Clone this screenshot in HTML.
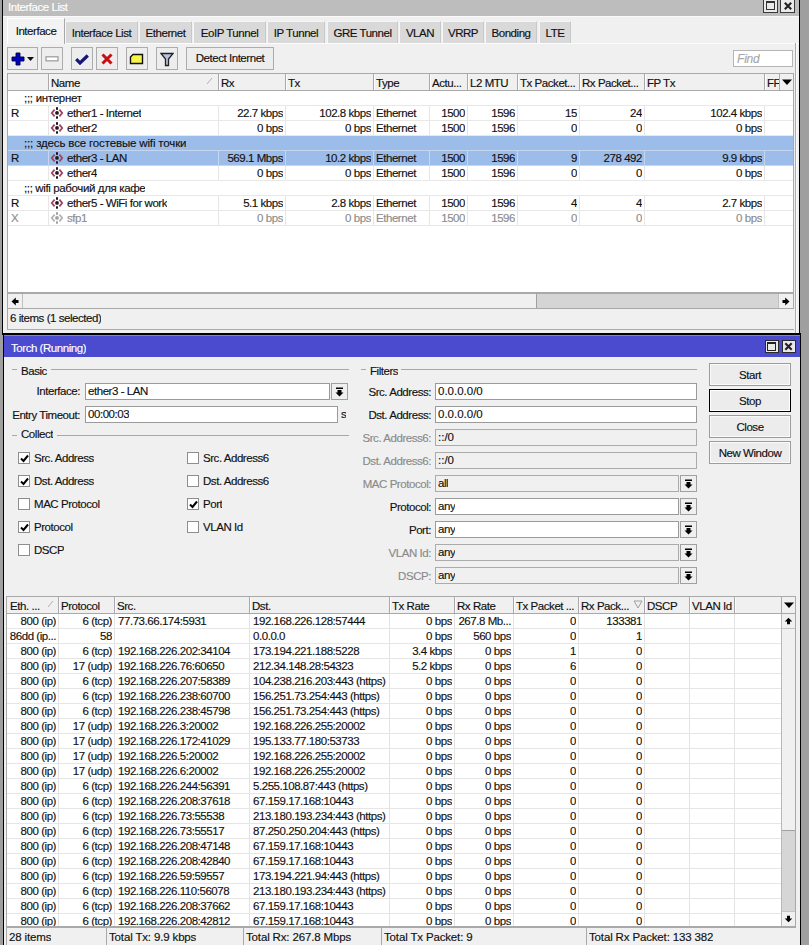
<!DOCTYPE html><html><head><meta charset="utf-8"><style>
*{margin:0;padding:0;box-sizing:border-box}
html,body{width:809px;height:945px;overflow:hidden;background:#9f9f9f}
body{position:relative;font-family:"Liberation Sans",sans-serif;font-size:11.5px;letter-spacing:-0.45px;color:#111}
div{position:absolute}
.t{white-space:nowrap;overflow:hidden;-webkit-text-stroke:0.15px currentColor}
</style></head><body><div style="left:2px;top:0px;width:798px;height:335px;background:#000"></div>
<div style="left:3px;top:0px;width:796px;height:333px;background:#f0f0f0"></div>
<div style="left:3px;top:0px;width:796px;height:16px;background:#bdbdbd"></div>
<div class="t" style="left:8px;top:0px;height:15px;line-height:15px;text-align:left;color:#fff;">Interface List</div>
<div style="left:3px;top:16px;width:796px;height:1px;background:#fafafa"></div>
<div style="left:763px;top:0px;width:15px;height:13px;background:#eaeaea;border:1px solid #3a3a3a;border-top:none"></div>
<div style="left:780px;top:0px;width:15px;height:13px;background:#eaeaea;border:1px solid #3a3a3a;border-top:none"></div>
<div style="left:766px;top:1px;width:9px;height:9px;border:1.5px solid #333;border-top-width:2px"></div>
<svg style="position:absolute;left:784px;top:2px" width="8" height="8"><path d="M0.8 0.8L7.2 7.2M7.2 0.8L0.8 7.2" stroke="#222" stroke-width="2.1"/></svg>
<div style="left:7px;top:18px;width:58px;height:26px;background:#f3f3f3;border:1px solid #fff;border-right:1px solid #a8a8a8;border-bottom:none"></div>
<div class="t" style="left:7px;top:24px;width:58px;height:15px;line-height:15px;text-align:center;">Interface</div>
<div style="left:65px;top:21px;width:73px;height:22px;background:#d9d9d9;border-left:1px solid #f6f6f6;border-top:1px solid #f6f6f6;border-right:1px solid #c8c8c8"></div>
<div class="t" style="left:65px;top:26px;width:73px;height:15px;line-height:15px;text-align:center;">Interface List</div>
<div style="left:139px;top:21px;width:53px;height:22px;background:#d9d9d9;border-left:1px solid #f6f6f6;border-top:1px solid #f6f6f6;border-right:1px solid #c8c8c8"></div>
<div class="t" style="left:139px;top:26px;width:53px;height:15px;line-height:15px;text-align:center;">Ethernet</div>
<div style="left:193px;top:21px;width:73px;height:22px;background:#d9d9d9;border-left:1px solid #f6f6f6;border-top:1px solid #f6f6f6;border-right:1px solid #c8c8c8"></div>
<div class="t" style="left:193px;top:26px;width:73px;height:15px;line-height:15px;text-align:center;">EoIP Tunnel</div>
<div style="left:267px;top:21px;width:58px;height:22px;background:#d9d9d9;border-left:1px solid #f6f6f6;border-top:1px solid #f6f6f6;border-right:1px solid #c8c8c8"></div>
<div class="t" style="left:267px;top:26px;width:58px;height:15px;line-height:15px;text-align:center;">IP Tunnel</div>
<div style="left:327px;top:21px;width:71px;height:22px;background:#d9d9d9;border-left:1px solid #f6f6f6;border-top:1px solid #f6f6f6;border-right:1px solid #c8c8c8"></div>
<div class="t" style="left:327px;top:26px;width:71px;height:15px;line-height:15px;text-align:center;">GRE Tunnel</div>
<div style="left:399px;top:21px;width:42px;height:22px;background:#d9d9d9;border-left:1px solid #f6f6f6;border-top:1px solid #f6f6f6;border-right:1px solid #c8c8c8"></div>
<div class="t" style="left:399px;top:26px;width:42px;height:15px;line-height:15px;text-align:center;">VLAN</div>
<div style="left:442px;top:21px;width:42px;height:22px;background:#d9d9d9;border-left:1px solid #f6f6f6;border-top:1px solid #f6f6f6;border-right:1px solid #c8c8c8"></div>
<div class="t" style="left:442px;top:26px;width:42px;height:15px;line-height:15px;text-align:center;">VRRP</div>
<div style="left:485px;top:21px;width:52px;height:22px;background:#d9d9d9;border-left:1px solid #f6f6f6;border-top:1px solid #f6f6f6;border-right:1px solid #c8c8c8"></div>
<div class="t" style="left:485px;top:26px;width:52px;height:15px;line-height:15px;text-align:center;">Bonding</div>
<div style="left:539px;top:21px;width:32px;height:22px;background:#d9d9d9;border-left:1px solid #f6f6f6;border-top:1px solid #f6f6f6;border-right:1px solid #c8c8c8"></div>
<div class="t" style="left:539px;top:26px;width:32px;height:15px;line-height:15px;text-align:center;">LTE</div>
<div style="left:65px;top:43px;width:734px;height:1px;background:#fdfdfd"></div>
<div style="left:7px;top:47px;width:31px;height:23px;background:#ededed;border:1px solid #acacac"></div>
<div style="left:41px;top:47px;width:22px;height:23px;background:#ededed;border:1px solid #acacac"></div>
<div style="left:71px;top:47px;width:22px;height:23px;background:#ededed;border:1px solid #acacac"></div>
<div style="left:96px;top:47px;width:22px;height:23px;background:#ededed;border:1px solid #acacac"></div>
<div style="left:126px;top:47px;width:22px;height:23px;background:#ededed;border:1px solid #acacac"></div>
<div style="left:156px;top:47px;width:22px;height:23px;background:#ededed;border:1px solid #acacac"></div>
<div style="left:186px;top:47px;width:88px;height:23px;background:#ededed;border:1px solid #acacac"></div>
<div class="t" style="left:186px;top:51px;width:88px;height:15px;line-height:15px;text-align:center;">Detect Internet</div>
<svg style="position:absolute;left:11px;top:52px" width="26" height="14"><path d="M5 1h4v4h4v4h-4v4h-4v-4h-4v-4h4z" fill="#0000c0" stroke="#000040" stroke-width="0.9"/><path d="M16 5h7l-3.5 4z" fill="#111"/></svg>
<svg style="position:absolute;left:45px;top:56px" width="14" height="6"><rect x="1" y="0.8" width="12" height="4" fill="#fff" stroke="#9a9a9a" stroke-width="1.2"/></svg>
<svg style="position:absolute;left:75px;top:53px" width="14" height="12"><path d="M1.2 6.2L5 10L12.8 2.5" fill="none" stroke="#17177a" stroke-width="3.2"/></svg>
<svg style="position:absolute;left:100px;top:53px" width="14" height="12"><path d="M2.5 1.5L11.5 10.5M11.5 1.5L2.5 10.5" stroke="#c41010" stroke-width="3"/></svg>
<svg style="position:absolute;left:129px;top:53px" width="16" height="12"><path d="M4 1.5H13.5V10.5H1.5V4z" fill="#f5f545" stroke="#111" stroke-width="1.4"/></svg>
<svg style="position:absolute;left:160px;top:52px" width="14" height="15"><path d="M1 1.5H13L8.5 7V13.5H5.5V7z" fill="#b9c3de" stroke="#222" stroke-width="1.3"/></svg>
<div style="left:733px;top:50px;width:60px;height:17px;background:#fff;border:1px solid #b5b5b5"></div>
<div class="t" style="left:737px;top:52px;height:15px;line-height:15px;text-align:left;color:#a8a8a8;font-style:italic;font-size:12px;letter-spacing:-0.2px">Find</div>
<div style="left:795px;top:43px;width:1px;height:290px;background:#acacac"></div>
<div style="left:796px;top:43px;width:1px;height:290px;background:#fbfbfb"></div>
<div style="left:7px;top:73px;width:787px;height:220px;background:#fff;border:1px solid #a9a9a9"></div>
<div style="left:8px;top:74px;width:785px;height:17px;background:#f0f0f0;border-bottom:1px solid #a9a9a9"></div>
<div class="t" style="left:11px;top:76px;width:37px;height:15px;line-height:15px;text-align:left;"></div>
<div style="left:48px;top:74px;width:1px;height:16px;background:#a9a9a9"></div>
<div style="left:49px;top:74px;width:1px;height:16px;background:#fcfcfc"></div>
<div class="t" style="left:51px;top:76px;width:167px;height:15px;line-height:15px;text-align:left;">Name</div>
<div style="left:218px;top:74px;width:1px;height:16px;background:#a9a9a9"></div>
<div style="left:219px;top:74px;width:1px;height:16px;background:#fcfcfc"></div>
<div class="t" style="left:221px;top:76px;width:64px;height:15px;line-height:15px;text-align:left;">Rx</div>
<div style="left:285px;top:74px;width:1px;height:16px;background:#a9a9a9"></div>
<div style="left:286px;top:74px;width:1px;height:16px;background:#fcfcfc"></div>
<div class="t" style="left:288px;top:76px;width:85px;height:15px;line-height:15px;text-align:left;">Tx</div>
<div style="left:373px;top:74px;width:1px;height:16px;background:#a9a9a9"></div>
<div style="left:374px;top:74px;width:1px;height:16px;background:#fcfcfc"></div>
<div class="t" style="left:376px;top:76px;width:53px;height:15px;line-height:15px;text-align:left;">Type</div>
<div style="left:429px;top:74px;width:1px;height:16px;background:#a9a9a9"></div>
<div style="left:430px;top:74px;width:1px;height:16px;background:#fcfcfc"></div>
<div class="t" style="left:432px;top:76px;width:35px;height:15px;line-height:15px;text-align:left;">Actu...</div>
<div style="left:467px;top:74px;width:1px;height:16px;background:#a9a9a9"></div>
<div style="left:468px;top:74px;width:1px;height:16px;background:#fcfcfc"></div>
<div class="t" style="left:470px;top:76px;width:47px;height:15px;line-height:15px;text-align:left;">L2 MTU</div>
<div style="left:517px;top:74px;width:1px;height:16px;background:#a9a9a9"></div>
<div style="left:518px;top:74px;width:1px;height:16px;background:#fcfcfc"></div>
<div class="t" style="left:520px;top:76px;width:59px;height:15px;line-height:15px;text-align:left;">Tx Packet...</div>
<div style="left:579px;top:74px;width:1px;height:16px;background:#a9a9a9"></div>
<div style="left:580px;top:74px;width:1px;height:16px;background:#fcfcfc"></div>
<div class="t" style="left:582px;top:76px;width:62px;height:15px;line-height:15px;text-align:left;">Rx Packet...</div>
<div style="left:644px;top:74px;width:1px;height:16px;background:#a9a9a9"></div>
<div style="left:645px;top:74px;width:1px;height:16px;background:#fcfcfc"></div>
<div class="t" style="left:647px;top:76px;width:117px;height:15px;line-height:15px;text-align:left;">FP Tx</div>
<div style="left:764px;top:74px;width:1px;height:16px;background:#a9a9a9"></div>
<div style="left:765px;top:74px;width:1px;height:16px;background:#fcfcfc"></div>
<div class="t" style="left:767px;top:76px;width:12px;height:15px;line-height:15px;text-align:left;">FF</div>
<div style="left:779px;top:74px;width:1px;height:16px;background:#a9a9a9"></div>
<svg style="position:absolute;left:781px;top:78px" width="12" height="8"><path d="M1 1.5H11L6 7z" fill="#000"/></svg>
<svg style="position:absolute;left:206px;top:77px" width="8" height="8"><path d="M1 7L6 1" stroke="#b0b0b0" stroke-width="1"/></svg>
<div class="t" style="left:24px;top:91px;height:15px;line-height:15px;text-align:left;letter-spacing:-0.28px">;;; интернет</div>
<div style="left:8px;top:105px;width:785px;height:1px;background:#e8e8e8"></div>
<div class="t" style="left:11px;top:106px;width:37px;height:15px;line-height:15px;text-align:left;">R</div>
<div style="left:48px;top:106px;width:1px;height:15px;background:#e6e6e6"></div>
<svg style="position:absolute;left:50px;top:106px" width="14" height="14"><path d="M4.6 3.6L1.8 7L4.6 10.4" fill="none" stroke="#9a4660" stroke-width="1.8"/><path d="M9.4 3.6L12.2 7L9.4 10.4" fill="none" stroke="#9a4660" stroke-width="1.8"/><circle cx="7" cy="6.9" r="1.9" fill="#24141a"/><rect x="6" y="1.2" width="2" height="2.6" fill="#24141a"/><rect x="6" y="10.3" width="2" height="2.4" fill="#24141a"/></svg>
<div class="t" style="left:67px;top:106px;height:15px;line-height:15px;text-align:left;">ether1 - Internet</div>
<div style="left:218px;top:106px;width:1px;height:15px;background:#e6e6e6"></div>
<div class="t" style="left:218px;top:106px;width:65px;height:15px;line-height:15px;text-align:right;">22.7 kbps</div>
<div style="left:285px;top:106px;width:1px;height:15px;background:#e6e6e6"></div>
<div class="t" style="left:285px;top:106px;width:86px;height:15px;line-height:15px;text-align:right;">102.8 kbps</div>
<div style="left:373px;top:106px;width:1px;height:15px;background:#e6e6e6"></div>
<div class="t" style="left:376px;top:106px;width:53px;height:15px;line-height:15px;text-align:left;">Ethernet</div>
<div style="left:429px;top:106px;width:1px;height:15px;background:#e6e6e6"></div>
<div class="t" style="left:429px;top:106px;width:36px;height:15px;line-height:15px;text-align:right;">1500</div>
<div style="left:467px;top:106px;width:1px;height:15px;background:#e6e6e6"></div>
<div class="t" style="left:467px;top:106px;width:48px;height:15px;line-height:15px;text-align:right;">1596</div>
<div style="left:517px;top:106px;width:1px;height:15px;background:#e6e6e6"></div>
<div class="t" style="left:517px;top:106px;width:60px;height:15px;line-height:15px;text-align:right;">15</div>
<div style="left:579px;top:106px;width:1px;height:15px;background:#e6e6e6"></div>
<div class="t" style="left:579px;top:106px;width:63px;height:15px;line-height:15px;text-align:right;">24</div>
<div style="left:644px;top:106px;width:1px;height:15px;background:#e6e6e6"></div>
<div class="t" style="left:644px;top:106px;width:118px;height:15px;line-height:15px;text-align:right;">102.4 kbps</div>
<div style="left:764px;top:106px;width:1px;height:15px;background:#e6e6e6"></div>
<div style="left:8px;top:120px;width:785px;height:1px;background:#e8e8e8"></div>
<div style="left:48px;top:121px;width:1px;height:15px;background:#e6e6e6"></div>
<svg style="position:absolute;left:50px;top:121px" width="14" height="14"><path d="M4.6 3.6L1.8 7L4.6 10.4" fill="none" stroke="#9a4660" stroke-width="1.8"/><path d="M9.4 3.6L12.2 7L9.4 10.4" fill="none" stroke="#9a4660" stroke-width="1.8"/><circle cx="7" cy="6.9" r="1.9" fill="#24141a"/><rect x="6" y="1.2" width="2" height="2.6" fill="#24141a"/><rect x="6" y="10.3" width="2" height="2.4" fill="#24141a"/></svg>
<div class="t" style="left:67px;top:121px;height:15px;line-height:15px;text-align:left;">ether2</div>
<div style="left:218px;top:121px;width:1px;height:15px;background:#e6e6e6"></div>
<div class="t" style="left:218px;top:121px;width:65px;height:15px;line-height:15px;text-align:right;">0 bps</div>
<div style="left:285px;top:121px;width:1px;height:15px;background:#e6e6e6"></div>
<div class="t" style="left:285px;top:121px;width:86px;height:15px;line-height:15px;text-align:right;">0 bps</div>
<div style="left:373px;top:121px;width:1px;height:15px;background:#e6e6e6"></div>
<div class="t" style="left:376px;top:121px;width:53px;height:15px;line-height:15px;text-align:left;">Ethernet</div>
<div style="left:429px;top:121px;width:1px;height:15px;background:#e6e6e6"></div>
<div class="t" style="left:429px;top:121px;width:36px;height:15px;line-height:15px;text-align:right;">1500</div>
<div style="left:467px;top:121px;width:1px;height:15px;background:#e6e6e6"></div>
<div class="t" style="left:467px;top:121px;width:48px;height:15px;line-height:15px;text-align:right;">1596</div>
<div style="left:517px;top:121px;width:1px;height:15px;background:#e6e6e6"></div>
<div class="t" style="left:517px;top:121px;width:60px;height:15px;line-height:15px;text-align:right;">0</div>
<div style="left:579px;top:121px;width:1px;height:15px;background:#e6e6e6"></div>
<div class="t" style="left:579px;top:121px;width:63px;height:15px;line-height:15px;text-align:right;">0</div>
<div style="left:644px;top:121px;width:1px;height:15px;background:#e6e6e6"></div>
<div class="t" style="left:644px;top:121px;width:118px;height:15px;line-height:15px;text-align:right;">0 bps</div>
<div style="left:764px;top:121px;width:1px;height:15px;background:#e6e6e6"></div>
<div style="left:8px;top:135px;width:785px;height:1px;background:#e8e8e8"></div>
<div style="left:8px;top:136px;width:785px;height:15px;background:#9cbde9"></div>
<div class="t" style="left:24px;top:136px;height:15px;line-height:15px;text-align:left;letter-spacing:-0.15px">;;; здесь все гостевые wifi точки</div>
<div style="left:8px;top:150px;width:785px;height:1px;background:#c5d6ee"></div>
<div style="left:8px;top:151px;width:785px;height:15px;background:#9cbde9"></div>
<div class="t" style="left:11px;top:151px;width:37px;height:15px;line-height:15px;text-align:left;">R</div>
<div style="left:48px;top:151px;width:1px;height:15px;background:#c5d6ee"></div>
<svg style="position:absolute;left:50px;top:151px" width="14" height="14"><path d="M4.6 3.6L1.8 7L4.6 10.4" fill="none" stroke="#9a4660" stroke-width="1.8"/><path d="M9.4 3.6L12.2 7L9.4 10.4" fill="none" stroke="#9a4660" stroke-width="1.8"/><circle cx="7" cy="6.9" r="1.9" fill="#24141a"/><rect x="6" y="1.2" width="2" height="2.6" fill="#24141a"/><rect x="6" y="10.3" width="2" height="2.4" fill="#24141a"/></svg>
<div class="t" style="left:67px;top:151px;height:15px;line-height:15px;text-align:left;">ether3 - LAN</div>
<div style="left:218px;top:151px;width:1px;height:15px;background:#c5d6ee"></div>
<div class="t" style="left:218px;top:151px;width:65px;height:15px;line-height:15px;text-align:right;">569.1 Mbps</div>
<div style="left:285px;top:151px;width:1px;height:15px;background:#c5d6ee"></div>
<div class="t" style="left:285px;top:151px;width:86px;height:15px;line-height:15px;text-align:right;">10.2 kbps</div>
<div style="left:373px;top:151px;width:1px;height:15px;background:#c5d6ee"></div>
<div class="t" style="left:376px;top:151px;width:53px;height:15px;line-height:15px;text-align:left;">Ethernet</div>
<div style="left:429px;top:151px;width:1px;height:15px;background:#c5d6ee"></div>
<div class="t" style="left:429px;top:151px;width:36px;height:15px;line-height:15px;text-align:right;">1500</div>
<div style="left:467px;top:151px;width:1px;height:15px;background:#c5d6ee"></div>
<div class="t" style="left:467px;top:151px;width:48px;height:15px;line-height:15px;text-align:right;">1596</div>
<div style="left:517px;top:151px;width:1px;height:15px;background:#c5d6ee"></div>
<div class="t" style="left:517px;top:151px;width:60px;height:15px;line-height:15px;text-align:right;">9</div>
<div style="left:579px;top:151px;width:1px;height:15px;background:#c5d6ee"></div>
<div class="t" style="left:579px;top:151px;width:63px;height:15px;line-height:15px;text-align:right;">278 492</div>
<div style="left:644px;top:151px;width:1px;height:15px;background:#c5d6ee"></div>
<div class="t" style="left:644px;top:151px;width:118px;height:15px;line-height:15px;text-align:right;">9.9 kbps</div>
<div style="left:764px;top:151px;width:1px;height:15px;background:#c5d6ee"></div>
<div style="left:8px;top:165px;width:785px;height:1px;background:#c5d6ee"></div>
<div style="left:48px;top:166px;width:1px;height:15px;background:#e6e6e6"></div>
<svg style="position:absolute;left:50px;top:166px" width="14" height="14"><path d="M4.6 3.6L1.8 7L4.6 10.4" fill="none" stroke="#9a4660" stroke-width="1.8"/><path d="M9.4 3.6L12.2 7L9.4 10.4" fill="none" stroke="#9a4660" stroke-width="1.8"/><circle cx="7" cy="6.9" r="1.9" fill="#24141a"/><rect x="6" y="1.2" width="2" height="2.6" fill="#24141a"/><rect x="6" y="10.3" width="2" height="2.4" fill="#24141a"/></svg>
<div class="t" style="left:67px;top:166px;height:15px;line-height:15px;text-align:left;">ether4</div>
<div style="left:218px;top:166px;width:1px;height:15px;background:#e6e6e6"></div>
<div class="t" style="left:218px;top:166px;width:65px;height:15px;line-height:15px;text-align:right;">0 bps</div>
<div style="left:285px;top:166px;width:1px;height:15px;background:#e6e6e6"></div>
<div class="t" style="left:285px;top:166px;width:86px;height:15px;line-height:15px;text-align:right;">0 bps</div>
<div style="left:373px;top:166px;width:1px;height:15px;background:#e6e6e6"></div>
<div class="t" style="left:376px;top:166px;width:53px;height:15px;line-height:15px;text-align:left;">Ethernet</div>
<div style="left:429px;top:166px;width:1px;height:15px;background:#e6e6e6"></div>
<div class="t" style="left:429px;top:166px;width:36px;height:15px;line-height:15px;text-align:right;">1500</div>
<div style="left:467px;top:166px;width:1px;height:15px;background:#e6e6e6"></div>
<div class="t" style="left:467px;top:166px;width:48px;height:15px;line-height:15px;text-align:right;">1596</div>
<div style="left:517px;top:166px;width:1px;height:15px;background:#e6e6e6"></div>
<div class="t" style="left:517px;top:166px;width:60px;height:15px;line-height:15px;text-align:right;">0</div>
<div style="left:579px;top:166px;width:1px;height:15px;background:#e6e6e6"></div>
<div class="t" style="left:579px;top:166px;width:63px;height:15px;line-height:15px;text-align:right;">0</div>
<div style="left:644px;top:166px;width:1px;height:15px;background:#e6e6e6"></div>
<div class="t" style="left:644px;top:166px;width:118px;height:15px;line-height:15px;text-align:right;">0 bps</div>
<div style="left:764px;top:166px;width:1px;height:15px;background:#e6e6e6"></div>
<div style="left:8px;top:180px;width:785px;height:1px;background:#e8e8e8"></div>
<div class="t" style="left:24px;top:181px;height:15px;line-height:15px;text-align:left;letter-spacing:-0.37px">;;; wifi рабочий для кафе</div>
<div style="left:8px;top:195px;width:785px;height:1px;background:#e8e8e8"></div>
<div class="t" style="left:11px;top:196px;width:37px;height:15px;line-height:15px;text-align:left;">R</div>
<div style="left:48px;top:196px;width:1px;height:15px;background:#e6e6e6"></div>
<svg style="position:absolute;left:50px;top:196px" width="14" height="14"><path d="M4.6 3.6L1.8 7L4.6 10.4" fill="none" stroke="#9a4660" stroke-width="1.8"/><path d="M9.4 3.6L12.2 7L9.4 10.4" fill="none" stroke="#9a4660" stroke-width="1.8"/><circle cx="7" cy="6.9" r="1.9" fill="#24141a"/><rect x="6" y="1.2" width="2" height="2.6" fill="#24141a"/><rect x="6" y="10.3" width="2" height="2.4" fill="#24141a"/></svg>
<div class="t" style="left:67px;top:196px;height:15px;line-height:15px;text-align:left;">ether5 - WiFi for work</div>
<div style="left:218px;top:196px;width:1px;height:15px;background:#e6e6e6"></div>
<div class="t" style="left:218px;top:196px;width:65px;height:15px;line-height:15px;text-align:right;">5.1 kbps</div>
<div style="left:285px;top:196px;width:1px;height:15px;background:#e6e6e6"></div>
<div class="t" style="left:285px;top:196px;width:86px;height:15px;line-height:15px;text-align:right;">2.8 kbps</div>
<div style="left:373px;top:196px;width:1px;height:15px;background:#e6e6e6"></div>
<div class="t" style="left:376px;top:196px;width:53px;height:15px;line-height:15px;text-align:left;">Ethernet</div>
<div style="left:429px;top:196px;width:1px;height:15px;background:#e6e6e6"></div>
<div class="t" style="left:429px;top:196px;width:36px;height:15px;line-height:15px;text-align:right;">1500</div>
<div style="left:467px;top:196px;width:1px;height:15px;background:#e6e6e6"></div>
<div class="t" style="left:467px;top:196px;width:48px;height:15px;line-height:15px;text-align:right;">1596</div>
<div style="left:517px;top:196px;width:1px;height:15px;background:#e6e6e6"></div>
<div class="t" style="left:517px;top:196px;width:60px;height:15px;line-height:15px;text-align:right;">4</div>
<div style="left:579px;top:196px;width:1px;height:15px;background:#e6e6e6"></div>
<div class="t" style="left:579px;top:196px;width:63px;height:15px;line-height:15px;text-align:right;">4</div>
<div style="left:644px;top:196px;width:1px;height:15px;background:#e6e6e6"></div>
<div class="t" style="left:644px;top:196px;width:118px;height:15px;line-height:15px;text-align:right;">2.7 kbps</div>
<div style="left:764px;top:196px;width:1px;height:15px;background:#e6e6e6"></div>
<div style="left:8px;top:210px;width:785px;height:1px;background:#e8e8e8"></div>
<div class="t" style="left:11px;top:211px;width:37px;height:15px;line-height:15px;text-align:left;color:#8c8c8c;">X</div>
<div style="left:48px;top:211px;width:1px;height:15px;background:#e6e6e6"></div>
<svg style="position:absolute;left:50px;top:211px" width="14" height="14"><path d="M4.6 3.6L1.8 7L4.6 10.4" fill="none" stroke="#b4b4b4" stroke-width="1.8"/><path d="M9.4 3.6L12.2 7L9.4 10.4" fill="none" stroke="#b4b4b4" stroke-width="1.8"/><circle cx="7" cy="6.9" r="1.9" fill="#a0a0a0"/><rect x="6" y="1.2" width="2" height="2.6" fill="#a0a0a0"/><rect x="6" y="10.3" width="2" height="2.4" fill="#a0a0a0"/></svg>
<div class="t" style="left:67px;top:211px;height:15px;line-height:15px;text-align:left;color:#8c8c8c;">sfp1</div>
<div style="left:218px;top:211px;width:1px;height:15px;background:#e6e6e6"></div>
<div class="t" style="left:218px;top:211px;width:65px;height:15px;line-height:15px;text-align:right;color:#8c8c8c;">0 bps</div>
<div style="left:285px;top:211px;width:1px;height:15px;background:#e6e6e6"></div>
<div class="t" style="left:285px;top:211px;width:86px;height:15px;line-height:15px;text-align:right;color:#8c8c8c;">0 bps</div>
<div style="left:373px;top:211px;width:1px;height:15px;background:#e6e6e6"></div>
<div class="t" style="left:376px;top:211px;width:53px;height:15px;line-height:15px;text-align:left;color:#8c8c8c;">Ethernet</div>
<div style="left:429px;top:211px;width:1px;height:15px;background:#e6e6e6"></div>
<div class="t" style="left:429px;top:211px;width:36px;height:15px;line-height:15px;text-align:right;color:#8c8c8c;">1500</div>
<div style="left:467px;top:211px;width:1px;height:15px;background:#e6e6e6"></div>
<div class="t" style="left:467px;top:211px;width:48px;height:15px;line-height:15px;text-align:right;color:#8c8c8c;">1596</div>
<div style="left:517px;top:211px;width:1px;height:15px;background:#e6e6e6"></div>
<div class="t" style="left:517px;top:211px;width:60px;height:15px;line-height:15px;text-align:right;color:#8c8c8c;">0</div>
<div style="left:579px;top:211px;width:1px;height:15px;background:#e6e6e6"></div>
<div class="t" style="left:579px;top:211px;width:63px;height:15px;line-height:15px;text-align:right;color:#8c8c8c;">0</div>
<div style="left:644px;top:211px;width:1px;height:15px;background:#e6e6e6"></div>
<div class="t" style="left:644px;top:211px;width:118px;height:15px;line-height:15px;text-align:right;color:#8c8c8c;">0 bps</div>
<div style="left:764px;top:211px;width:1px;height:15px;background:#e6e6e6"></div>
<div style="left:8px;top:225px;width:785px;height:1px;background:#e8e8e8"></div>
<div style="left:7px;top:293px;width:787px;height:16px;background:#d5d5d5;border:1px solid #a9a9a9"></div>
<div style="left:8px;top:294px;width:529px;height:14px;background:#f0f0f0;border-right:1px solid #a0a0a0"></div>
<div style="left:8px;top:294px;width:15px;height:14px;background:#f0f0f0;border-right:1px solid #c0c0c0"></div>
<div style="left:778px;top:294px;width:15px;height:14px;background:#f0f0f0;border-left:1px solid #c0c0c0"></div>
<svg style="position:absolute;left:11px;top:297px" width="8" height="9"><path d="M0.5 4.5L4.8 0.5V3H7.5V6H4.8V8.5z" fill="#000"/></svg>
<svg style="position:absolute;left:782px;top:297px" width="8" height="9"><path d="M7.5 4.5L3.2 0.5V3H0.5V6H3.2V8.5z" fill="#000"/></svg>
<div style="left:7px;top:309px;width:787px;height:21px;background:#f0f0f0;border-left:1px solid #a9a9a9;border-bottom:1px solid #a9a9a9"></div>
<div class="t" style="left:10px;top:311px;height:15px;line-height:15px;text-align:left;">6 items (1 selected)</div>
<div style="left:3px;top:333px;width:798px;height:612px;background:#000"></div>
<div style="left:4px;top:335px;width:796px;height:610px;background:#f0f0f0"></div>
<div style="left:4px;top:335px;width:796px;height:22px;background:#4b4bcf"></div>
<div style="left:4px;top:335px;width:796px;height:1px;background:#8080e0"></div>
<div class="t" style="left:11px;top:341px;height:15px;line-height:15px;text-align:left;color:#fff">Torch (Running)</div>
<div style="left:765px;top:340px;width:14px;height:13px;background:#e9e9e9;border:1px solid #2a2a2a"></div>
<div style="left:782px;top:340px;width:14px;height:13px;background:#e9e9e9;border:1px solid #2a2a2a"></div>
<div style="left:767px;top:342px;width:9px;height:9px;border:1.4px solid #222;border-top-width:2.5px"></div>
<svg style="position:absolute;left:784px;top:342px" width="9" height="9"><path d="M1.3 1.3L7.7 7.7M7.7 1.3L1.3 7.7" stroke="#222" stroke-width="2.1"/></svg>
<div style="left:12px;top:369px;width:5px;height:1px;background:#a8a8a8"></div>
<div class="t" style="left:21px;top:364px;height:15px;line-height:15px;text-align:left;">Basic</div>
<div style="left:51px;top:369px;width:298px;height:1px;background:#a8a8a8"></div>
<div style="left:12px;top:435px;width:5px;height:1px;background:#a8a8a8"></div>
<div class="t" style="left:21px;top:427px;height:15px;line-height:15px;text-align:left;">Collect</div>
<div style="left:57px;top:435px;width:292px;height:1px;background:#a8a8a8"></div>
<div style="left:361px;top:369px;width:5px;height:1px;background:#a8a8a8"></div>
<div class="t" style="left:370px;top:364px;height:15px;line-height:15px;text-align:left;">Filters</div>
<div style="left:401px;top:369px;width:296px;height:1px;background:#a8a8a8"></div>
<div class="t" style="left:0px;top:384px;width:80px;height:15px;line-height:15px;text-align:right;">Interface:</div>
<div style="left:85px;top:383px;width:245px;height:17px;background:#fff;border:1px solid #9a9a9a"></div>
<div class="t" style="left:88px;top:384px;height:15px;line-height:15px;text-align:left;">ether3 - LAN</div>
<div style="left:331px;top:383px;width:17px;height:17px;background:#efefef;border:1px solid #a0a0a0"></div>
<svg style="position:absolute;left:335px;top:387px" width="9" height="10"><rect x="1" y="0.5" width="7" height="1.5" fill="#000"/><path d="M2.5 3H6.5V5.5H8.5L4.5 9.5L0.5 5.5H2.5z" fill="#000"/></svg>
<div class="t" style="left:0px;top:408px;width:80px;height:15px;line-height:15px;text-align:right;">Entry Timeout:</div>
<div style="left:85px;top:406px;width:253px;height:17px;background:#fff;border:1px solid #9a9a9a"></div>
<div class="t" style="left:88px;top:407px;height:15px;line-height:15px;text-align:left;">00:00:03</div>
<div class="t" style="left:341px;top:407px;height:15px;line-height:15px;text-align:left;">s</div>
<div style="left:18px;top:452px;width:12px;height:12px;background:#fff;border:1px solid #8e8e8e"></div>
<svg style="position:absolute;left:20px;top:454px" width="9" height="9"><path d="M1 4.5L3.5 7L8 1.5" fill="none" stroke="#000" stroke-width="2"/></svg>
<div class="t" style="left:34px;top:451px;height:15px;line-height:15px;text-align:left;">Src. Address</div>
<div style="left:18px;top:475px;width:12px;height:12px;background:#fff;border:1px solid #8e8e8e"></div>
<svg style="position:absolute;left:20px;top:477px" width="9" height="9"><path d="M1 4.5L3.5 7L8 1.5" fill="none" stroke="#000" stroke-width="2"/></svg>
<div class="t" style="left:34px;top:474px;height:15px;line-height:15px;text-align:left;">Dst. Address</div>
<div style="left:18px;top:498px;width:12px;height:12px;background:#fff;border:1px solid #8e8e8e"></div>
<div class="t" style="left:34px;top:497px;height:15px;line-height:15px;text-align:left;">MAC Protocol</div>
<div style="left:18px;top:521px;width:12px;height:12px;background:#fff;border:1px solid #8e8e8e"></div>
<svg style="position:absolute;left:20px;top:523px" width="9" height="9"><path d="M1 4.5L3.5 7L8 1.5" fill="none" stroke="#000" stroke-width="2"/></svg>
<div class="t" style="left:34px;top:520px;height:15px;line-height:15px;text-align:left;">Protocol</div>
<div style="left:18px;top:544px;width:12px;height:12px;background:#fff;border:1px solid #8e8e8e"></div>
<div class="t" style="left:34px;top:543px;height:15px;line-height:15px;text-align:left;">DSCP</div>
<div style="left:187px;top:452px;width:12px;height:12px;background:#fff;border:1px solid #8e8e8e"></div>
<div class="t" style="left:203px;top:451px;height:15px;line-height:15px;text-align:left;">Src. Address6</div>
<div style="left:187px;top:475px;width:12px;height:12px;background:#fff;border:1px solid #8e8e8e"></div>
<div class="t" style="left:203px;top:474px;height:15px;line-height:15px;text-align:left;">Dst. Address6</div>
<div style="left:187px;top:498px;width:12px;height:12px;background:#fff;border:1px solid #8e8e8e"></div>
<svg style="position:absolute;left:189px;top:500px" width="9" height="9"><path d="M1 4.5L3.5 7L8 1.5" fill="none" stroke="#000" stroke-width="2"/></svg>
<div class="t" style="left:203px;top:497px;height:15px;line-height:15px;text-align:left;">Port</div>
<div style="left:187px;top:521px;width:12px;height:12px;background:#fff;border:1px solid #8e8e8e"></div>
<div class="t" style="left:203px;top:520px;height:15px;line-height:15px;text-align:left;">VLAN Id</div>
<div class="t" style="left:340px;top:385px;width:91px;height:15px;line-height:15px;text-align:right;color:#111">Src. Address:</div>
<div style="left:435px;top:383px;width:262px;height:17px;background:#fff;border:1px solid #9a9a9a"></div>
<div class="t" style="left:438px;top:384px;height:15px;line-height:15px;text-align:left;letter-spacing:0px">0.0.0.0/0</div>
<div class="t" style="left:340px;top:408px;width:91px;height:15px;line-height:15px;text-align:right;color:#111">Dst. Address:</div>
<div style="left:435px;top:406px;width:262px;height:17px;background:#fff;border:1px solid #9a9a9a"></div>
<div class="t" style="left:438px;top:407px;height:15px;line-height:15px;text-align:left;letter-spacing:0px">0.0.0.0/0</div>
<div class="t" style="left:340px;top:431px;width:91px;height:15px;line-height:15px;text-align:right;color:#8a8a8a">Src. Address6:</div>
<div style="left:435px;top:429px;width:262px;height:17px;background:#f0f0f0;border:1px solid #ababab"></div>
<div class="t" style="left:438px;top:430px;height:15px;line-height:15px;text-align:left;letter-spacing:0px">::/0</div>
<div class="t" style="left:340px;top:454px;width:91px;height:15px;line-height:15px;text-align:right;color:#8a8a8a">Dst. Address6:</div>
<div style="left:435px;top:452px;width:262px;height:17px;background:#f0f0f0;border:1px solid #ababab"></div>
<div class="t" style="left:438px;top:453px;height:15px;line-height:15px;text-align:left;letter-spacing:0px">::/0</div>
<div class="t" style="left:340px;top:477px;width:91px;height:15px;line-height:15px;text-align:right;color:#8a8a8a">MAC Protocol:</div>
<div style="left:435px;top:475px;width:244px;height:17px;background:#f0f0f0;border:1px solid #ababab"></div>
<div class="t" style="left:438px;top:476px;height:15px;line-height:15px;text-align:left;">all</div>
<div style="left:680px;top:475px;width:17px;height:17px;background:#efefef;border:1px solid #a0a0a0"></div>
<svg style="position:absolute;left:684px;top:479px" width="9" height="10"><rect x="1" y="0.5" width="7" height="1.5" fill="#000"/><path d="M2.5 3H6.5V5.5H8.5L4.5 9.5L0.5 5.5H2.5z" fill="#000"/></svg>
<div class="t" style="left:340px;top:500px;width:91px;height:15px;line-height:15px;text-align:right;color:#111">Protocol:</div>
<div style="left:435px;top:498px;width:244px;height:17px;background:#fff;border:1px solid #9a9a9a"></div>
<div class="t" style="left:438px;top:499px;height:15px;line-height:15px;text-align:left;">any</div>
<div style="left:680px;top:498px;width:17px;height:17px;background:#efefef;border:1px solid #a0a0a0"></div>
<svg style="position:absolute;left:684px;top:502px" width="9" height="10"><rect x="1" y="0.5" width="7" height="1.5" fill="#000"/><path d="M2.5 3H6.5V5.5H8.5L4.5 9.5L0.5 5.5H2.5z" fill="#000"/></svg>
<div class="t" style="left:340px;top:523px;width:91px;height:15px;line-height:15px;text-align:right;color:#111">Port:</div>
<div style="left:435px;top:521px;width:244px;height:17px;background:#fff;border:1px solid #9a9a9a"></div>
<div class="t" style="left:438px;top:522px;height:15px;line-height:15px;text-align:left;">any</div>
<div style="left:680px;top:521px;width:17px;height:17px;background:#efefef;border:1px solid #a0a0a0"></div>
<svg style="position:absolute;left:684px;top:525px" width="9" height="10"><rect x="1" y="0.5" width="7" height="1.5" fill="#000"/><path d="M2.5 3H6.5V5.5H8.5L4.5 9.5L0.5 5.5H2.5z" fill="#000"/></svg>
<div class="t" style="left:340px;top:546px;width:91px;height:15px;line-height:15px;text-align:right;color:#8a8a8a">VLAN Id:</div>
<div style="left:435px;top:544px;width:244px;height:17px;background:#f0f0f0;border:1px solid #ababab"></div>
<div class="t" style="left:438px;top:545px;height:15px;line-height:15px;text-align:left;">any</div>
<div style="left:680px;top:544px;width:17px;height:17px;background:#efefef;border:1px solid #a0a0a0"></div>
<svg style="position:absolute;left:684px;top:548px" width="9" height="10"><rect x="1" y="0.5" width="7" height="1.5" fill="#000"/><path d="M2.5 3H6.5V5.5H8.5L4.5 9.5L0.5 5.5H2.5z" fill="#000"/></svg>
<div class="t" style="left:340px;top:569px;width:91px;height:15px;line-height:15px;text-align:right;color:#8a8a8a">DSCP:</div>
<div style="left:435px;top:567px;width:244px;height:17px;background:#f0f0f0;border:1px solid #ababab"></div>
<div class="t" style="left:438px;top:568px;height:15px;line-height:15px;text-align:left;">any</div>
<div style="left:680px;top:567px;width:17px;height:17px;background:#efefef;border:1px solid #a0a0a0"></div>
<svg style="position:absolute;left:684px;top:571px" width="9" height="10"><rect x="1" y="0.5" width="7" height="1.5" fill="#000"/><path d="M2.5 3H6.5V5.5H8.5L4.5 9.5L0.5 5.5H2.5z" fill="#000"/></svg>
<div style="left:709px;top:363px;width:82px;height:23px;background:#ececec;border:1px solid #9c9c9c;box-shadow:inset 0 0 0 1px #fafafa"></div>
<div class="t" style="left:709px;top:368px;width:82px;height:15px;line-height:15px;text-align:center;">Start</div>
<div style="left:709px;top:389px;width:82px;height:23px;background:#ececec;border:1px solid #000;box-shadow:inset 0 0 0 1px #fff"></div>
<div class="t" style="left:709px;top:394px;width:82px;height:15px;line-height:15px;text-align:center;">Stop</div>
<div style="left:709px;top:415px;width:82px;height:23px;background:#ececec;border:1px solid #9c9c9c;box-shadow:inset 0 0 0 1px #fafafa"></div>
<div class="t" style="left:709px;top:420px;width:82px;height:15px;line-height:15px;text-align:center;">Close</div>
<div style="left:709px;top:441px;width:82px;height:23px;background:#ececec;border:1px solid #9c9c9c;box-shadow:inset 0 0 0 1px #fafafa"></div>
<div class="t" style="left:709px;top:446px;width:82px;height:15px;line-height:15px;text-align:center;">New Window</div>
<div style="left:6px;top:596px;width:790px;height:331px;background:#fff;border:1px solid #a9a9a9"></div>
<div style="left:7px;top:597px;width:788px;height:17px;background:#f0f0f0;border-bottom:1px solid #a9a9a9"></div>
<div class="t" style="left:10px;top:599px;width:48px;height:15px;line-height:15px;text-align:left;">Eth. ...</div>
<div style="left:58px;top:597px;width:1px;height:16px;background:#a9a9a9"></div>
<div style="left:59px;top:597px;width:1px;height:16px;background:#fcfcfc"></div>
<div class="t" style="left:61px;top:599px;width:53px;height:15px;line-height:15px;text-align:left;">Protocol</div>
<div style="left:114px;top:597px;width:1px;height:16px;background:#a9a9a9"></div>
<div style="left:115px;top:597px;width:1px;height:16px;background:#fcfcfc"></div>
<div class="t" style="left:117px;top:599px;width:132px;height:15px;line-height:15px;text-align:left;">Src.</div>
<div style="left:249px;top:597px;width:1px;height:16px;background:#a9a9a9"></div>
<div style="left:250px;top:597px;width:1px;height:16px;background:#fcfcfc"></div>
<div class="t" style="left:252px;top:599px;width:137px;height:15px;line-height:15px;text-align:left;">Dst.</div>
<div style="left:389px;top:597px;width:1px;height:16px;background:#a9a9a9"></div>
<div style="left:390px;top:597px;width:1px;height:16px;background:#fcfcfc"></div>
<div class="t" style="left:392px;top:599px;width:62px;height:15px;line-height:15px;text-align:left;">Tx Rate</div>
<div style="left:454px;top:597px;width:1px;height:16px;background:#a9a9a9"></div>
<div style="left:455px;top:597px;width:1px;height:16px;background:#fcfcfc"></div>
<div class="t" style="left:457px;top:599px;width:56px;height:15px;line-height:15px;text-align:left;">Rx Rate</div>
<div style="left:513px;top:597px;width:1px;height:16px;background:#a9a9a9"></div>
<div style="left:514px;top:597px;width:1px;height:16px;background:#fcfcfc"></div>
<div class="t" style="left:516px;top:599px;width:62px;height:15px;line-height:15px;text-align:left;">Tx Packet ...</div>
<div style="left:578px;top:597px;width:1px;height:16px;background:#a9a9a9"></div>
<div style="left:579px;top:597px;width:1px;height:16px;background:#fcfcfc"></div>
<div class="t" style="left:581px;top:599px;width:63px;height:15px;line-height:15px;text-align:left;">Rx Pack...</div>
<div style="left:644px;top:597px;width:1px;height:16px;background:#a9a9a9"></div>
<div style="left:645px;top:597px;width:1px;height:16px;background:#fcfcfc"></div>
<div class="t" style="left:647px;top:599px;width:42px;height:15px;line-height:15px;text-align:left;">DSCP</div>
<div style="left:689px;top:597px;width:1px;height:16px;background:#a9a9a9"></div>
<div style="left:690px;top:597px;width:1px;height:16px;background:#fcfcfc"></div>
<div class="t" style="left:692px;top:599px;width:42px;height:15px;line-height:15px;text-align:left;">VLAN Id</div>
<div style="left:734px;top:597px;width:1px;height:16px;background:#a9a9a9"></div>
<div style="left:735px;top:597px;width:1px;height:16px;background:#fcfcfc"></div>
<div class="t" style="left:737px;top:599px;width:44px;height:15px;line-height:15px;text-align:left;"></div>
<div style="left:781px;top:597px;width:1px;height:17px;background:#a9a9a9"></div>
<svg style="position:absolute;left:783px;top:601px" width="12" height="8"><path d="M1 1.5H11L6 7z" fill="#000"/></svg>
<svg style="position:absolute;left:47px;top:600px" width="8" height="8"><path d="M1 7L6 1" stroke="#b0b0b0" stroke-width="1"/></svg>
<svg style="position:absolute;left:633px;top:600px" width="10" height="9"><path d="M1 1H9L5 8z" fill="none" stroke="#a0a0a0" stroke-width="1"/></svg>
<div style="left:7px;top:614px;width:774px;height:312px;overflow:hidden">
<div style="left:51px;top:0px;width:1px;height:15px;background:#e3e3e3"></div>
<div style="left:107px;top:0px;width:1px;height:15px;background:#e3e3e3"></div>
<div style="left:242px;top:0px;width:1px;height:15px;background:#e3e3e3"></div>
<div style="left:382px;top:0px;width:1px;height:15px;background:#e3e3e3"></div>
<div style="left:447px;top:0px;width:1px;height:15px;background:#e3e3e3"></div>
<div style="left:506px;top:0px;width:1px;height:15px;background:#e3e3e3"></div>
<div style="left:571px;top:0px;width:1px;height:15px;background:#e3e3e3"></div>
<div style="left:637px;top:0px;width:1px;height:15px;background:#e3e3e3"></div>
<div style="left:682px;top:0px;width:1px;height:15px;background:#e3e3e3"></div>
<div style="left:727px;top:0px;width:1px;height:15px;background:#e3e3e3"></div>
<div style="left:0px;top:14px;width:774px;height:1px;background:#e6e6e6"></div>
<div class="t" style="left:0px;top:0px;width:49px;height:15px;line-height:15px;text-align:right;">800 (ip)</div>
<div class="t" style="left:51px;top:0px;width:54px;height:15px;line-height:15px;text-align:right;">6 (tcp)</div>
<div class="t" style="left:111px;top:0px;width:131px;height:15px;line-height:15px;text-align:left;">77.73.66.174:5931</div>
<div class="t" style="left:246px;top:0px;width:136px;height:15px;line-height:15px;text-align:left;">192.168.226.128:57444</div>
<div class="t" style="left:382px;top:0px;width:63px;height:15px;line-height:15px;text-align:right;">0 bps</div>
<div class="t" style="left:447px;top:0px;width:57px;height:15px;line-height:15px;text-align:right;">267.8 Mb...</div>
<div class="t" style="left:506px;top:0px;width:63px;height:15px;line-height:15px;text-align:right;">0</div>
<div class="t" style="left:571px;top:0px;width:64px;height:15px;line-height:15px;text-align:right;">133381</div>
<div style="left:51px;top:15px;width:1px;height:15px;background:#e3e3e3"></div>
<div style="left:107px;top:15px;width:1px;height:15px;background:#e3e3e3"></div>
<div style="left:242px;top:15px;width:1px;height:15px;background:#e3e3e3"></div>
<div style="left:382px;top:15px;width:1px;height:15px;background:#e3e3e3"></div>
<div style="left:447px;top:15px;width:1px;height:15px;background:#e3e3e3"></div>
<div style="left:506px;top:15px;width:1px;height:15px;background:#e3e3e3"></div>
<div style="left:571px;top:15px;width:1px;height:15px;background:#e3e3e3"></div>
<div style="left:637px;top:15px;width:1px;height:15px;background:#e3e3e3"></div>
<div style="left:682px;top:15px;width:1px;height:15px;background:#e3e3e3"></div>
<div style="left:727px;top:15px;width:1px;height:15px;background:#e3e3e3"></div>
<div style="left:0px;top:29px;width:774px;height:1px;background:#e6e6e6"></div>
<div class="t" style="left:0px;top:15px;width:49px;height:15px;line-height:15px;text-align:right;">86dd (ip...</div>
<div class="t" style="left:51px;top:15px;width:54px;height:15px;line-height:15px;text-align:right;">58</div>
<div class="t" style="left:246px;top:15px;width:136px;height:15px;line-height:15px;text-align:left;">0.0.0.0</div>
<div class="t" style="left:382px;top:15px;width:63px;height:15px;line-height:15px;text-align:right;">0 bps</div>
<div class="t" style="left:447px;top:15px;width:57px;height:15px;line-height:15px;text-align:right;">560 bps</div>
<div class="t" style="left:506px;top:15px;width:63px;height:15px;line-height:15px;text-align:right;">0</div>
<div class="t" style="left:571px;top:15px;width:64px;height:15px;line-height:15px;text-align:right;">1</div>
<div style="left:51px;top:30px;width:1px;height:15px;background:#e3e3e3"></div>
<div style="left:107px;top:30px;width:1px;height:15px;background:#e3e3e3"></div>
<div style="left:242px;top:30px;width:1px;height:15px;background:#e3e3e3"></div>
<div style="left:382px;top:30px;width:1px;height:15px;background:#e3e3e3"></div>
<div style="left:447px;top:30px;width:1px;height:15px;background:#e3e3e3"></div>
<div style="left:506px;top:30px;width:1px;height:15px;background:#e3e3e3"></div>
<div style="left:571px;top:30px;width:1px;height:15px;background:#e3e3e3"></div>
<div style="left:637px;top:30px;width:1px;height:15px;background:#e3e3e3"></div>
<div style="left:682px;top:30px;width:1px;height:15px;background:#e3e3e3"></div>
<div style="left:727px;top:30px;width:1px;height:15px;background:#e3e3e3"></div>
<div style="left:0px;top:44px;width:774px;height:1px;background:#e6e6e6"></div>
<div class="t" style="left:0px;top:30px;width:49px;height:15px;line-height:15px;text-align:right;">800 (ip)</div>
<div class="t" style="left:51px;top:30px;width:54px;height:15px;line-height:15px;text-align:right;">6 (tcp)</div>
<div class="t" style="left:111px;top:30px;width:131px;height:15px;line-height:15px;text-align:left;">192.168.226.202:34104</div>
<div class="t" style="left:246px;top:30px;width:136px;height:15px;line-height:15px;text-align:left;">173.194.221.188:5228</div>
<div class="t" style="left:382px;top:30px;width:63px;height:15px;line-height:15px;text-align:right;">3.4 kbps</div>
<div class="t" style="left:447px;top:30px;width:57px;height:15px;line-height:15px;text-align:right;">0 bps</div>
<div class="t" style="left:506px;top:30px;width:63px;height:15px;line-height:15px;text-align:right;">1</div>
<div class="t" style="left:571px;top:30px;width:64px;height:15px;line-height:15px;text-align:right;">0</div>
<div style="left:51px;top:45px;width:1px;height:15px;background:#e3e3e3"></div>
<div style="left:107px;top:45px;width:1px;height:15px;background:#e3e3e3"></div>
<div style="left:242px;top:45px;width:1px;height:15px;background:#e3e3e3"></div>
<div style="left:382px;top:45px;width:1px;height:15px;background:#e3e3e3"></div>
<div style="left:447px;top:45px;width:1px;height:15px;background:#e3e3e3"></div>
<div style="left:506px;top:45px;width:1px;height:15px;background:#e3e3e3"></div>
<div style="left:571px;top:45px;width:1px;height:15px;background:#e3e3e3"></div>
<div style="left:637px;top:45px;width:1px;height:15px;background:#e3e3e3"></div>
<div style="left:682px;top:45px;width:1px;height:15px;background:#e3e3e3"></div>
<div style="left:727px;top:45px;width:1px;height:15px;background:#e3e3e3"></div>
<div style="left:0px;top:59px;width:774px;height:1px;background:#e6e6e6"></div>
<div class="t" style="left:0px;top:45px;width:49px;height:15px;line-height:15px;text-align:right;">800 (ip)</div>
<div class="t" style="left:51px;top:45px;width:54px;height:15px;line-height:15px;text-align:right;">17 (udp)</div>
<div class="t" style="left:111px;top:45px;width:131px;height:15px;line-height:15px;text-align:left;">192.168.226.76:60650</div>
<div class="t" style="left:246px;top:45px;width:136px;height:15px;line-height:15px;text-align:left;">212.34.148.28:54323</div>
<div class="t" style="left:382px;top:45px;width:63px;height:15px;line-height:15px;text-align:right;">5.2 kbps</div>
<div class="t" style="left:447px;top:45px;width:57px;height:15px;line-height:15px;text-align:right;">0 bps</div>
<div class="t" style="left:506px;top:45px;width:63px;height:15px;line-height:15px;text-align:right;">6</div>
<div class="t" style="left:571px;top:45px;width:64px;height:15px;line-height:15px;text-align:right;">0</div>
<div style="left:51px;top:60px;width:1px;height:15px;background:#e3e3e3"></div>
<div style="left:107px;top:60px;width:1px;height:15px;background:#e3e3e3"></div>
<div style="left:242px;top:60px;width:1px;height:15px;background:#e3e3e3"></div>
<div style="left:382px;top:60px;width:1px;height:15px;background:#e3e3e3"></div>
<div style="left:447px;top:60px;width:1px;height:15px;background:#e3e3e3"></div>
<div style="left:506px;top:60px;width:1px;height:15px;background:#e3e3e3"></div>
<div style="left:571px;top:60px;width:1px;height:15px;background:#e3e3e3"></div>
<div style="left:637px;top:60px;width:1px;height:15px;background:#e3e3e3"></div>
<div style="left:682px;top:60px;width:1px;height:15px;background:#e3e3e3"></div>
<div style="left:727px;top:60px;width:1px;height:15px;background:#e3e3e3"></div>
<div style="left:0px;top:74px;width:774px;height:1px;background:#e6e6e6"></div>
<div class="t" style="left:0px;top:60px;width:49px;height:15px;line-height:15px;text-align:right;">800 (ip)</div>
<div class="t" style="left:51px;top:60px;width:54px;height:15px;line-height:15px;text-align:right;">6 (tcp)</div>
<div class="t" style="left:111px;top:60px;width:131px;height:15px;line-height:15px;text-align:left;">192.168.226.207:58389</div>
<div class="t" style="left:246px;top:60px;width:136px;height:15px;line-height:15px;text-align:left;">104.238.216.203:443 (https)</div>
<div class="t" style="left:382px;top:60px;width:63px;height:15px;line-height:15px;text-align:right;">0 bps</div>
<div class="t" style="left:447px;top:60px;width:57px;height:15px;line-height:15px;text-align:right;">0 bps</div>
<div class="t" style="left:506px;top:60px;width:63px;height:15px;line-height:15px;text-align:right;">0</div>
<div class="t" style="left:571px;top:60px;width:64px;height:15px;line-height:15px;text-align:right;">0</div>
<div style="left:51px;top:75px;width:1px;height:15px;background:#e3e3e3"></div>
<div style="left:107px;top:75px;width:1px;height:15px;background:#e3e3e3"></div>
<div style="left:242px;top:75px;width:1px;height:15px;background:#e3e3e3"></div>
<div style="left:382px;top:75px;width:1px;height:15px;background:#e3e3e3"></div>
<div style="left:447px;top:75px;width:1px;height:15px;background:#e3e3e3"></div>
<div style="left:506px;top:75px;width:1px;height:15px;background:#e3e3e3"></div>
<div style="left:571px;top:75px;width:1px;height:15px;background:#e3e3e3"></div>
<div style="left:637px;top:75px;width:1px;height:15px;background:#e3e3e3"></div>
<div style="left:682px;top:75px;width:1px;height:15px;background:#e3e3e3"></div>
<div style="left:727px;top:75px;width:1px;height:15px;background:#e3e3e3"></div>
<div style="left:0px;top:89px;width:774px;height:1px;background:#e6e6e6"></div>
<div class="t" style="left:0px;top:75px;width:49px;height:15px;line-height:15px;text-align:right;">800 (ip)</div>
<div class="t" style="left:51px;top:75px;width:54px;height:15px;line-height:15px;text-align:right;">6 (tcp)</div>
<div class="t" style="left:111px;top:75px;width:131px;height:15px;line-height:15px;text-align:left;">192.168.226.238:60700</div>
<div class="t" style="left:246px;top:75px;width:136px;height:15px;line-height:15px;text-align:left;">156.251.73.254:443 (https)</div>
<div class="t" style="left:382px;top:75px;width:63px;height:15px;line-height:15px;text-align:right;">0 bps</div>
<div class="t" style="left:447px;top:75px;width:57px;height:15px;line-height:15px;text-align:right;">0 bps</div>
<div class="t" style="left:506px;top:75px;width:63px;height:15px;line-height:15px;text-align:right;">0</div>
<div class="t" style="left:571px;top:75px;width:64px;height:15px;line-height:15px;text-align:right;">0</div>
<div style="left:51px;top:90px;width:1px;height:15px;background:#e3e3e3"></div>
<div style="left:107px;top:90px;width:1px;height:15px;background:#e3e3e3"></div>
<div style="left:242px;top:90px;width:1px;height:15px;background:#e3e3e3"></div>
<div style="left:382px;top:90px;width:1px;height:15px;background:#e3e3e3"></div>
<div style="left:447px;top:90px;width:1px;height:15px;background:#e3e3e3"></div>
<div style="left:506px;top:90px;width:1px;height:15px;background:#e3e3e3"></div>
<div style="left:571px;top:90px;width:1px;height:15px;background:#e3e3e3"></div>
<div style="left:637px;top:90px;width:1px;height:15px;background:#e3e3e3"></div>
<div style="left:682px;top:90px;width:1px;height:15px;background:#e3e3e3"></div>
<div style="left:727px;top:90px;width:1px;height:15px;background:#e3e3e3"></div>
<div style="left:0px;top:104px;width:774px;height:1px;background:#e6e6e6"></div>
<div class="t" style="left:0px;top:90px;width:49px;height:15px;line-height:15px;text-align:right;">800 (ip)</div>
<div class="t" style="left:51px;top:90px;width:54px;height:15px;line-height:15px;text-align:right;">6 (tcp)</div>
<div class="t" style="left:111px;top:90px;width:131px;height:15px;line-height:15px;text-align:left;">192.168.226.238:45798</div>
<div class="t" style="left:246px;top:90px;width:136px;height:15px;line-height:15px;text-align:left;">156.251.73.254:443 (https)</div>
<div class="t" style="left:382px;top:90px;width:63px;height:15px;line-height:15px;text-align:right;">0 bps</div>
<div class="t" style="left:447px;top:90px;width:57px;height:15px;line-height:15px;text-align:right;">0 bps</div>
<div class="t" style="left:506px;top:90px;width:63px;height:15px;line-height:15px;text-align:right;">0</div>
<div class="t" style="left:571px;top:90px;width:64px;height:15px;line-height:15px;text-align:right;">0</div>
<div style="left:51px;top:105px;width:1px;height:15px;background:#e3e3e3"></div>
<div style="left:107px;top:105px;width:1px;height:15px;background:#e3e3e3"></div>
<div style="left:242px;top:105px;width:1px;height:15px;background:#e3e3e3"></div>
<div style="left:382px;top:105px;width:1px;height:15px;background:#e3e3e3"></div>
<div style="left:447px;top:105px;width:1px;height:15px;background:#e3e3e3"></div>
<div style="left:506px;top:105px;width:1px;height:15px;background:#e3e3e3"></div>
<div style="left:571px;top:105px;width:1px;height:15px;background:#e3e3e3"></div>
<div style="left:637px;top:105px;width:1px;height:15px;background:#e3e3e3"></div>
<div style="left:682px;top:105px;width:1px;height:15px;background:#e3e3e3"></div>
<div style="left:727px;top:105px;width:1px;height:15px;background:#e3e3e3"></div>
<div style="left:0px;top:119px;width:774px;height:1px;background:#e6e6e6"></div>
<div class="t" style="left:0px;top:105px;width:49px;height:15px;line-height:15px;text-align:right;">800 (ip)</div>
<div class="t" style="left:51px;top:105px;width:54px;height:15px;line-height:15px;text-align:right;">17 (udp)</div>
<div class="t" style="left:111px;top:105px;width:131px;height:15px;line-height:15px;text-align:left;">192.168.226.3:20002</div>
<div class="t" style="left:246px;top:105px;width:136px;height:15px;line-height:15px;text-align:left;">192.168.226.255:20002</div>
<div class="t" style="left:382px;top:105px;width:63px;height:15px;line-height:15px;text-align:right;">0 bps</div>
<div class="t" style="left:447px;top:105px;width:57px;height:15px;line-height:15px;text-align:right;">0 bps</div>
<div class="t" style="left:506px;top:105px;width:63px;height:15px;line-height:15px;text-align:right;">0</div>
<div class="t" style="left:571px;top:105px;width:64px;height:15px;line-height:15px;text-align:right;">0</div>
<div style="left:51px;top:120px;width:1px;height:15px;background:#e3e3e3"></div>
<div style="left:107px;top:120px;width:1px;height:15px;background:#e3e3e3"></div>
<div style="left:242px;top:120px;width:1px;height:15px;background:#e3e3e3"></div>
<div style="left:382px;top:120px;width:1px;height:15px;background:#e3e3e3"></div>
<div style="left:447px;top:120px;width:1px;height:15px;background:#e3e3e3"></div>
<div style="left:506px;top:120px;width:1px;height:15px;background:#e3e3e3"></div>
<div style="left:571px;top:120px;width:1px;height:15px;background:#e3e3e3"></div>
<div style="left:637px;top:120px;width:1px;height:15px;background:#e3e3e3"></div>
<div style="left:682px;top:120px;width:1px;height:15px;background:#e3e3e3"></div>
<div style="left:727px;top:120px;width:1px;height:15px;background:#e3e3e3"></div>
<div style="left:0px;top:134px;width:774px;height:1px;background:#e6e6e6"></div>
<div class="t" style="left:0px;top:120px;width:49px;height:15px;line-height:15px;text-align:right;">800 (ip)</div>
<div class="t" style="left:51px;top:120px;width:54px;height:15px;line-height:15px;text-align:right;">17 (udp)</div>
<div class="t" style="left:111px;top:120px;width:131px;height:15px;line-height:15px;text-align:left;">192.168.226.172:41029</div>
<div class="t" style="left:246px;top:120px;width:136px;height:15px;line-height:15px;text-align:left;">195.133.77.180:53733</div>
<div class="t" style="left:382px;top:120px;width:63px;height:15px;line-height:15px;text-align:right;">0 bps</div>
<div class="t" style="left:447px;top:120px;width:57px;height:15px;line-height:15px;text-align:right;">0 bps</div>
<div class="t" style="left:506px;top:120px;width:63px;height:15px;line-height:15px;text-align:right;">0</div>
<div class="t" style="left:571px;top:120px;width:64px;height:15px;line-height:15px;text-align:right;">0</div>
<div style="left:51px;top:135px;width:1px;height:15px;background:#e3e3e3"></div>
<div style="left:107px;top:135px;width:1px;height:15px;background:#e3e3e3"></div>
<div style="left:242px;top:135px;width:1px;height:15px;background:#e3e3e3"></div>
<div style="left:382px;top:135px;width:1px;height:15px;background:#e3e3e3"></div>
<div style="left:447px;top:135px;width:1px;height:15px;background:#e3e3e3"></div>
<div style="left:506px;top:135px;width:1px;height:15px;background:#e3e3e3"></div>
<div style="left:571px;top:135px;width:1px;height:15px;background:#e3e3e3"></div>
<div style="left:637px;top:135px;width:1px;height:15px;background:#e3e3e3"></div>
<div style="left:682px;top:135px;width:1px;height:15px;background:#e3e3e3"></div>
<div style="left:727px;top:135px;width:1px;height:15px;background:#e3e3e3"></div>
<div style="left:0px;top:149px;width:774px;height:1px;background:#e6e6e6"></div>
<div class="t" style="left:0px;top:135px;width:49px;height:15px;line-height:15px;text-align:right;">800 (ip)</div>
<div class="t" style="left:51px;top:135px;width:54px;height:15px;line-height:15px;text-align:right;">17 (udp)</div>
<div class="t" style="left:111px;top:135px;width:131px;height:15px;line-height:15px;text-align:left;">192.168.226.5:20002</div>
<div class="t" style="left:246px;top:135px;width:136px;height:15px;line-height:15px;text-align:left;">192.168.226.255:20002</div>
<div class="t" style="left:382px;top:135px;width:63px;height:15px;line-height:15px;text-align:right;">0 bps</div>
<div class="t" style="left:447px;top:135px;width:57px;height:15px;line-height:15px;text-align:right;">0 bps</div>
<div class="t" style="left:506px;top:135px;width:63px;height:15px;line-height:15px;text-align:right;">0</div>
<div class="t" style="left:571px;top:135px;width:64px;height:15px;line-height:15px;text-align:right;">0</div>
<div style="left:51px;top:150px;width:1px;height:15px;background:#e3e3e3"></div>
<div style="left:107px;top:150px;width:1px;height:15px;background:#e3e3e3"></div>
<div style="left:242px;top:150px;width:1px;height:15px;background:#e3e3e3"></div>
<div style="left:382px;top:150px;width:1px;height:15px;background:#e3e3e3"></div>
<div style="left:447px;top:150px;width:1px;height:15px;background:#e3e3e3"></div>
<div style="left:506px;top:150px;width:1px;height:15px;background:#e3e3e3"></div>
<div style="left:571px;top:150px;width:1px;height:15px;background:#e3e3e3"></div>
<div style="left:637px;top:150px;width:1px;height:15px;background:#e3e3e3"></div>
<div style="left:682px;top:150px;width:1px;height:15px;background:#e3e3e3"></div>
<div style="left:727px;top:150px;width:1px;height:15px;background:#e3e3e3"></div>
<div style="left:0px;top:164px;width:774px;height:1px;background:#e6e6e6"></div>
<div class="t" style="left:0px;top:150px;width:49px;height:15px;line-height:15px;text-align:right;">800 (ip)</div>
<div class="t" style="left:51px;top:150px;width:54px;height:15px;line-height:15px;text-align:right;">17 (udp)</div>
<div class="t" style="left:111px;top:150px;width:131px;height:15px;line-height:15px;text-align:left;">192.168.226.6:20002</div>
<div class="t" style="left:246px;top:150px;width:136px;height:15px;line-height:15px;text-align:left;">192.168.226.255:20002</div>
<div class="t" style="left:382px;top:150px;width:63px;height:15px;line-height:15px;text-align:right;">0 bps</div>
<div class="t" style="left:447px;top:150px;width:57px;height:15px;line-height:15px;text-align:right;">0 bps</div>
<div class="t" style="left:506px;top:150px;width:63px;height:15px;line-height:15px;text-align:right;">0</div>
<div class="t" style="left:571px;top:150px;width:64px;height:15px;line-height:15px;text-align:right;">0</div>
<div style="left:51px;top:165px;width:1px;height:15px;background:#e3e3e3"></div>
<div style="left:107px;top:165px;width:1px;height:15px;background:#e3e3e3"></div>
<div style="left:242px;top:165px;width:1px;height:15px;background:#e3e3e3"></div>
<div style="left:382px;top:165px;width:1px;height:15px;background:#e3e3e3"></div>
<div style="left:447px;top:165px;width:1px;height:15px;background:#e3e3e3"></div>
<div style="left:506px;top:165px;width:1px;height:15px;background:#e3e3e3"></div>
<div style="left:571px;top:165px;width:1px;height:15px;background:#e3e3e3"></div>
<div style="left:637px;top:165px;width:1px;height:15px;background:#e3e3e3"></div>
<div style="left:682px;top:165px;width:1px;height:15px;background:#e3e3e3"></div>
<div style="left:727px;top:165px;width:1px;height:15px;background:#e3e3e3"></div>
<div style="left:0px;top:179px;width:774px;height:1px;background:#e6e6e6"></div>
<div class="t" style="left:0px;top:165px;width:49px;height:15px;line-height:15px;text-align:right;">800 (ip)</div>
<div class="t" style="left:51px;top:165px;width:54px;height:15px;line-height:15px;text-align:right;">6 (tcp)</div>
<div class="t" style="left:111px;top:165px;width:131px;height:15px;line-height:15px;text-align:left;">192.168.226.244:56391</div>
<div class="t" style="left:246px;top:165px;width:136px;height:15px;line-height:15px;text-align:left;">5.255.108.87:443 (https)</div>
<div class="t" style="left:382px;top:165px;width:63px;height:15px;line-height:15px;text-align:right;">0 bps</div>
<div class="t" style="left:447px;top:165px;width:57px;height:15px;line-height:15px;text-align:right;">0 bps</div>
<div class="t" style="left:506px;top:165px;width:63px;height:15px;line-height:15px;text-align:right;">0</div>
<div class="t" style="left:571px;top:165px;width:64px;height:15px;line-height:15px;text-align:right;">0</div>
<div style="left:51px;top:180px;width:1px;height:15px;background:#e3e3e3"></div>
<div style="left:107px;top:180px;width:1px;height:15px;background:#e3e3e3"></div>
<div style="left:242px;top:180px;width:1px;height:15px;background:#e3e3e3"></div>
<div style="left:382px;top:180px;width:1px;height:15px;background:#e3e3e3"></div>
<div style="left:447px;top:180px;width:1px;height:15px;background:#e3e3e3"></div>
<div style="left:506px;top:180px;width:1px;height:15px;background:#e3e3e3"></div>
<div style="left:571px;top:180px;width:1px;height:15px;background:#e3e3e3"></div>
<div style="left:637px;top:180px;width:1px;height:15px;background:#e3e3e3"></div>
<div style="left:682px;top:180px;width:1px;height:15px;background:#e3e3e3"></div>
<div style="left:727px;top:180px;width:1px;height:15px;background:#e3e3e3"></div>
<div style="left:0px;top:194px;width:774px;height:1px;background:#e6e6e6"></div>
<div class="t" style="left:0px;top:180px;width:49px;height:15px;line-height:15px;text-align:right;">800 (ip)</div>
<div class="t" style="left:51px;top:180px;width:54px;height:15px;line-height:15px;text-align:right;">6 (tcp)</div>
<div class="t" style="left:111px;top:180px;width:131px;height:15px;line-height:15px;text-align:left;">192.168.226.208:37618</div>
<div class="t" style="left:246px;top:180px;width:136px;height:15px;line-height:15px;text-align:left;">67.159.17.168:10443</div>
<div class="t" style="left:382px;top:180px;width:63px;height:15px;line-height:15px;text-align:right;">0 bps</div>
<div class="t" style="left:447px;top:180px;width:57px;height:15px;line-height:15px;text-align:right;">0 bps</div>
<div class="t" style="left:506px;top:180px;width:63px;height:15px;line-height:15px;text-align:right;">0</div>
<div class="t" style="left:571px;top:180px;width:64px;height:15px;line-height:15px;text-align:right;">0</div>
<div style="left:51px;top:195px;width:1px;height:15px;background:#e3e3e3"></div>
<div style="left:107px;top:195px;width:1px;height:15px;background:#e3e3e3"></div>
<div style="left:242px;top:195px;width:1px;height:15px;background:#e3e3e3"></div>
<div style="left:382px;top:195px;width:1px;height:15px;background:#e3e3e3"></div>
<div style="left:447px;top:195px;width:1px;height:15px;background:#e3e3e3"></div>
<div style="left:506px;top:195px;width:1px;height:15px;background:#e3e3e3"></div>
<div style="left:571px;top:195px;width:1px;height:15px;background:#e3e3e3"></div>
<div style="left:637px;top:195px;width:1px;height:15px;background:#e3e3e3"></div>
<div style="left:682px;top:195px;width:1px;height:15px;background:#e3e3e3"></div>
<div style="left:727px;top:195px;width:1px;height:15px;background:#e3e3e3"></div>
<div style="left:0px;top:209px;width:774px;height:1px;background:#e6e6e6"></div>
<div class="t" style="left:0px;top:195px;width:49px;height:15px;line-height:15px;text-align:right;">800 (ip)</div>
<div class="t" style="left:51px;top:195px;width:54px;height:15px;line-height:15px;text-align:right;">6 (tcp)</div>
<div class="t" style="left:111px;top:195px;width:131px;height:15px;line-height:15px;text-align:left;">192.168.226.73:55538</div>
<div class="t" style="left:246px;top:195px;width:136px;height:15px;line-height:15px;text-align:left;">213.180.193.234:443 (https)</div>
<div class="t" style="left:382px;top:195px;width:63px;height:15px;line-height:15px;text-align:right;">0 bps</div>
<div class="t" style="left:447px;top:195px;width:57px;height:15px;line-height:15px;text-align:right;">0 bps</div>
<div class="t" style="left:506px;top:195px;width:63px;height:15px;line-height:15px;text-align:right;">0</div>
<div class="t" style="left:571px;top:195px;width:64px;height:15px;line-height:15px;text-align:right;">0</div>
<div style="left:51px;top:210px;width:1px;height:15px;background:#e3e3e3"></div>
<div style="left:107px;top:210px;width:1px;height:15px;background:#e3e3e3"></div>
<div style="left:242px;top:210px;width:1px;height:15px;background:#e3e3e3"></div>
<div style="left:382px;top:210px;width:1px;height:15px;background:#e3e3e3"></div>
<div style="left:447px;top:210px;width:1px;height:15px;background:#e3e3e3"></div>
<div style="left:506px;top:210px;width:1px;height:15px;background:#e3e3e3"></div>
<div style="left:571px;top:210px;width:1px;height:15px;background:#e3e3e3"></div>
<div style="left:637px;top:210px;width:1px;height:15px;background:#e3e3e3"></div>
<div style="left:682px;top:210px;width:1px;height:15px;background:#e3e3e3"></div>
<div style="left:727px;top:210px;width:1px;height:15px;background:#e3e3e3"></div>
<div style="left:0px;top:224px;width:774px;height:1px;background:#e6e6e6"></div>
<div class="t" style="left:0px;top:210px;width:49px;height:15px;line-height:15px;text-align:right;">800 (ip)</div>
<div class="t" style="left:51px;top:210px;width:54px;height:15px;line-height:15px;text-align:right;">6 (tcp)</div>
<div class="t" style="left:111px;top:210px;width:131px;height:15px;line-height:15px;text-align:left;">192.168.226.73:55517</div>
<div class="t" style="left:246px;top:210px;width:136px;height:15px;line-height:15px;text-align:left;">87.250.250.204:443 (https)</div>
<div class="t" style="left:382px;top:210px;width:63px;height:15px;line-height:15px;text-align:right;">0 bps</div>
<div class="t" style="left:447px;top:210px;width:57px;height:15px;line-height:15px;text-align:right;">0 bps</div>
<div class="t" style="left:506px;top:210px;width:63px;height:15px;line-height:15px;text-align:right;">0</div>
<div class="t" style="left:571px;top:210px;width:64px;height:15px;line-height:15px;text-align:right;">0</div>
<div style="left:51px;top:225px;width:1px;height:15px;background:#e3e3e3"></div>
<div style="left:107px;top:225px;width:1px;height:15px;background:#e3e3e3"></div>
<div style="left:242px;top:225px;width:1px;height:15px;background:#e3e3e3"></div>
<div style="left:382px;top:225px;width:1px;height:15px;background:#e3e3e3"></div>
<div style="left:447px;top:225px;width:1px;height:15px;background:#e3e3e3"></div>
<div style="left:506px;top:225px;width:1px;height:15px;background:#e3e3e3"></div>
<div style="left:571px;top:225px;width:1px;height:15px;background:#e3e3e3"></div>
<div style="left:637px;top:225px;width:1px;height:15px;background:#e3e3e3"></div>
<div style="left:682px;top:225px;width:1px;height:15px;background:#e3e3e3"></div>
<div style="left:727px;top:225px;width:1px;height:15px;background:#e3e3e3"></div>
<div style="left:0px;top:239px;width:774px;height:1px;background:#e6e6e6"></div>
<div class="t" style="left:0px;top:225px;width:49px;height:15px;line-height:15px;text-align:right;">800 (ip)</div>
<div class="t" style="left:51px;top:225px;width:54px;height:15px;line-height:15px;text-align:right;">6 (tcp)</div>
<div class="t" style="left:111px;top:225px;width:131px;height:15px;line-height:15px;text-align:left;">192.168.226.208:47148</div>
<div class="t" style="left:246px;top:225px;width:136px;height:15px;line-height:15px;text-align:left;">67.159.17.168:10443</div>
<div class="t" style="left:382px;top:225px;width:63px;height:15px;line-height:15px;text-align:right;">0 bps</div>
<div class="t" style="left:447px;top:225px;width:57px;height:15px;line-height:15px;text-align:right;">0 bps</div>
<div class="t" style="left:506px;top:225px;width:63px;height:15px;line-height:15px;text-align:right;">0</div>
<div class="t" style="left:571px;top:225px;width:64px;height:15px;line-height:15px;text-align:right;">0</div>
<div style="left:51px;top:240px;width:1px;height:15px;background:#e3e3e3"></div>
<div style="left:107px;top:240px;width:1px;height:15px;background:#e3e3e3"></div>
<div style="left:242px;top:240px;width:1px;height:15px;background:#e3e3e3"></div>
<div style="left:382px;top:240px;width:1px;height:15px;background:#e3e3e3"></div>
<div style="left:447px;top:240px;width:1px;height:15px;background:#e3e3e3"></div>
<div style="left:506px;top:240px;width:1px;height:15px;background:#e3e3e3"></div>
<div style="left:571px;top:240px;width:1px;height:15px;background:#e3e3e3"></div>
<div style="left:637px;top:240px;width:1px;height:15px;background:#e3e3e3"></div>
<div style="left:682px;top:240px;width:1px;height:15px;background:#e3e3e3"></div>
<div style="left:727px;top:240px;width:1px;height:15px;background:#e3e3e3"></div>
<div style="left:0px;top:254px;width:774px;height:1px;background:#e6e6e6"></div>
<div class="t" style="left:0px;top:240px;width:49px;height:15px;line-height:15px;text-align:right;">800 (ip)</div>
<div class="t" style="left:51px;top:240px;width:54px;height:15px;line-height:15px;text-align:right;">6 (tcp)</div>
<div class="t" style="left:111px;top:240px;width:131px;height:15px;line-height:15px;text-align:left;">192.168.226.208:42840</div>
<div class="t" style="left:246px;top:240px;width:136px;height:15px;line-height:15px;text-align:left;">67.159.17.168:10443</div>
<div class="t" style="left:382px;top:240px;width:63px;height:15px;line-height:15px;text-align:right;">0 bps</div>
<div class="t" style="left:447px;top:240px;width:57px;height:15px;line-height:15px;text-align:right;">0 bps</div>
<div class="t" style="left:506px;top:240px;width:63px;height:15px;line-height:15px;text-align:right;">0</div>
<div class="t" style="left:571px;top:240px;width:64px;height:15px;line-height:15px;text-align:right;">0</div>
<div style="left:51px;top:255px;width:1px;height:15px;background:#e3e3e3"></div>
<div style="left:107px;top:255px;width:1px;height:15px;background:#e3e3e3"></div>
<div style="left:242px;top:255px;width:1px;height:15px;background:#e3e3e3"></div>
<div style="left:382px;top:255px;width:1px;height:15px;background:#e3e3e3"></div>
<div style="left:447px;top:255px;width:1px;height:15px;background:#e3e3e3"></div>
<div style="left:506px;top:255px;width:1px;height:15px;background:#e3e3e3"></div>
<div style="left:571px;top:255px;width:1px;height:15px;background:#e3e3e3"></div>
<div style="left:637px;top:255px;width:1px;height:15px;background:#e3e3e3"></div>
<div style="left:682px;top:255px;width:1px;height:15px;background:#e3e3e3"></div>
<div style="left:727px;top:255px;width:1px;height:15px;background:#e3e3e3"></div>
<div style="left:0px;top:269px;width:774px;height:1px;background:#e6e6e6"></div>
<div class="t" style="left:0px;top:255px;width:49px;height:15px;line-height:15px;text-align:right;">800 (ip)</div>
<div class="t" style="left:51px;top:255px;width:54px;height:15px;line-height:15px;text-align:right;">6 (tcp)</div>
<div class="t" style="left:111px;top:255px;width:131px;height:15px;line-height:15px;text-align:left;">192.168.226.59:59557</div>
<div class="t" style="left:246px;top:255px;width:136px;height:15px;line-height:15px;text-align:left;">173.194.221.94:443 (https)</div>
<div class="t" style="left:382px;top:255px;width:63px;height:15px;line-height:15px;text-align:right;">0 bps</div>
<div class="t" style="left:447px;top:255px;width:57px;height:15px;line-height:15px;text-align:right;">0 bps</div>
<div class="t" style="left:506px;top:255px;width:63px;height:15px;line-height:15px;text-align:right;">0</div>
<div class="t" style="left:571px;top:255px;width:64px;height:15px;line-height:15px;text-align:right;">0</div>
<div style="left:51px;top:270px;width:1px;height:15px;background:#e3e3e3"></div>
<div style="left:107px;top:270px;width:1px;height:15px;background:#e3e3e3"></div>
<div style="left:242px;top:270px;width:1px;height:15px;background:#e3e3e3"></div>
<div style="left:382px;top:270px;width:1px;height:15px;background:#e3e3e3"></div>
<div style="left:447px;top:270px;width:1px;height:15px;background:#e3e3e3"></div>
<div style="left:506px;top:270px;width:1px;height:15px;background:#e3e3e3"></div>
<div style="left:571px;top:270px;width:1px;height:15px;background:#e3e3e3"></div>
<div style="left:637px;top:270px;width:1px;height:15px;background:#e3e3e3"></div>
<div style="left:682px;top:270px;width:1px;height:15px;background:#e3e3e3"></div>
<div style="left:727px;top:270px;width:1px;height:15px;background:#e3e3e3"></div>
<div style="left:0px;top:284px;width:774px;height:1px;background:#e6e6e6"></div>
<div class="t" style="left:0px;top:270px;width:49px;height:15px;line-height:15px;text-align:right;">800 (ip)</div>
<div class="t" style="left:51px;top:270px;width:54px;height:15px;line-height:15px;text-align:right;">6 (tcp)</div>
<div class="t" style="left:111px;top:270px;width:131px;height:15px;line-height:15px;text-align:left;">192.168.226.110:56078</div>
<div class="t" style="left:246px;top:270px;width:136px;height:15px;line-height:15px;text-align:left;">213.180.193.234:443 (https)</div>
<div class="t" style="left:382px;top:270px;width:63px;height:15px;line-height:15px;text-align:right;">0 bps</div>
<div class="t" style="left:447px;top:270px;width:57px;height:15px;line-height:15px;text-align:right;">0 bps</div>
<div class="t" style="left:506px;top:270px;width:63px;height:15px;line-height:15px;text-align:right;">0</div>
<div class="t" style="left:571px;top:270px;width:64px;height:15px;line-height:15px;text-align:right;">0</div>
<div style="left:51px;top:285px;width:1px;height:15px;background:#e3e3e3"></div>
<div style="left:107px;top:285px;width:1px;height:15px;background:#e3e3e3"></div>
<div style="left:242px;top:285px;width:1px;height:15px;background:#e3e3e3"></div>
<div style="left:382px;top:285px;width:1px;height:15px;background:#e3e3e3"></div>
<div style="left:447px;top:285px;width:1px;height:15px;background:#e3e3e3"></div>
<div style="left:506px;top:285px;width:1px;height:15px;background:#e3e3e3"></div>
<div style="left:571px;top:285px;width:1px;height:15px;background:#e3e3e3"></div>
<div style="left:637px;top:285px;width:1px;height:15px;background:#e3e3e3"></div>
<div style="left:682px;top:285px;width:1px;height:15px;background:#e3e3e3"></div>
<div style="left:727px;top:285px;width:1px;height:15px;background:#e3e3e3"></div>
<div style="left:0px;top:299px;width:774px;height:1px;background:#e6e6e6"></div>
<div class="t" style="left:0px;top:285px;width:49px;height:15px;line-height:15px;text-align:right;">800 (ip)</div>
<div class="t" style="left:51px;top:285px;width:54px;height:15px;line-height:15px;text-align:right;">6 (tcp)</div>
<div class="t" style="left:111px;top:285px;width:131px;height:15px;line-height:15px;text-align:left;">192.168.226.208:37662</div>
<div class="t" style="left:246px;top:285px;width:136px;height:15px;line-height:15px;text-align:left;">67.159.17.168:10443</div>
<div class="t" style="left:382px;top:285px;width:63px;height:15px;line-height:15px;text-align:right;">0 bps</div>
<div class="t" style="left:447px;top:285px;width:57px;height:15px;line-height:15px;text-align:right;">0 bps</div>
<div class="t" style="left:506px;top:285px;width:63px;height:15px;line-height:15px;text-align:right;">0</div>
<div class="t" style="left:571px;top:285px;width:64px;height:15px;line-height:15px;text-align:right;">0</div>
<div style="left:51px;top:300px;width:1px;height:15px;background:#e3e3e3"></div>
<div style="left:107px;top:300px;width:1px;height:15px;background:#e3e3e3"></div>
<div style="left:242px;top:300px;width:1px;height:15px;background:#e3e3e3"></div>
<div style="left:382px;top:300px;width:1px;height:15px;background:#e3e3e3"></div>
<div style="left:447px;top:300px;width:1px;height:15px;background:#e3e3e3"></div>
<div style="left:506px;top:300px;width:1px;height:15px;background:#e3e3e3"></div>
<div style="left:571px;top:300px;width:1px;height:15px;background:#e3e3e3"></div>
<div style="left:637px;top:300px;width:1px;height:15px;background:#e3e3e3"></div>
<div style="left:682px;top:300px;width:1px;height:15px;background:#e3e3e3"></div>
<div style="left:727px;top:300px;width:1px;height:15px;background:#e3e3e3"></div>
<div style="left:0px;top:314px;width:774px;height:1px;background:#e6e6e6"></div>
<div class="t" style="left:0px;top:300px;width:49px;height:15px;line-height:15px;text-align:right;">800 (ip)</div>
<div class="t" style="left:51px;top:300px;width:54px;height:15px;line-height:15px;text-align:right;">6 (tcp)</div>
<div class="t" style="left:111px;top:300px;width:131px;height:15px;line-height:15px;text-align:left;">192.168.226.208:42812</div>
<div class="t" style="left:246px;top:300px;width:136px;height:15px;line-height:15px;text-align:left;">67.159.17.168:10443</div>
<div class="t" style="left:382px;top:300px;width:63px;height:15px;line-height:15px;text-align:right;">0 bps</div>
<div class="t" style="left:447px;top:300px;width:57px;height:15px;line-height:15px;text-align:right;">0 bps</div>
<div class="t" style="left:506px;top:300px;width:63px;height:15px;line-height:15px;text-align:right;">0</div>
<div class="t" style="left:571px;top:300px;width:64px;height:15px;line-height:15px;text-align:right;">0</div>
</div>
<div style="left:781px;top:614px;width:14px;height:312px;background:#d6d6d6;border-left:1px solid #b8b8b8"></div>
<div style="left:782px;top:614px;width:13px;height:217px;background:#f0f0f0;border-bottom:1px solid #a0a0a0"></div>
<div style="left:782px;top:614px;width:13px;height:15px;background:#f0f0f0;border-bottom:1px solid #c4c4c4"></div>
<div style="left:782px;top:911px;width:13px;height:15px;background:#f0f0f0;border-top:1px solid #c4c4c4"></div>
<svg style="position:absolute;left:784px;top:617px" width="9" height="8"><path d="M4.5 0.8L8.3 4.6H6V7.2H3V4.6H0.7z" fill="#000"/></svg>
<svg style="position:absolute;left:784px;top:915px" width="9" height="8"><path d="M4.5 7.2L8.3 3.4H6V0.8H3V3.4H0.7z" fill="#000"/></svg>
<div style="left:6px;top:927px;width:100px;height:18px;border-left:1px solid #a9a9a9;border-top:1px solid #a9a9a9"></div>
<div class="t" style="left:9px;top:930px;height:15px;line-height:15px;text-align:left;letter-spacing:-0.15px">28 items</div>
<div style="left:106px;top:927px;width:137px;height:18px;border-left:1px solid #a9a9a9;border-top:1px solid #a9a9a9"></div>
<div class="t" style="left:109px;top:930px;height:15px;line-height:15px;text-align:left;letter-spacing:-0.15px">Total Tx: 9.9 kbps</div>
<div style="left:243px;top:927px;width:138px;height:18px;border-left:1px solid #a9a9a9;border-top:1px solid #a9a9a9"></div>
<div class="t" style="left:246px;top:930px;height:15px;line-height:15px;text-align:left;letter-spacing:-0.15px">Total Rx: 267.8 Mbps</div>
<div style="left:381px;top:927px;width:205px;height:18px;border-left:1px solid #a9a9a9;border-top:1px solid #a9a9a9"></div>
<div class="t" style="left:384px;top:930px;height:15px;line-height:15px;text-align:left;letter-spacing:-0.15px">Total Tx Packet: 9</div>
<div style="left:586px;top:927px;width:210px;height:18px;border-left:1px solid #a9a9a9;border-top:1px solid #a9a9a9"></div>
<div class="t" style="left:589px;top:930px;height:15px;line-height:15px;text-align:left;letter-spacing:-0.15px">Total Rx Packet: 133 382</div></body></html>
